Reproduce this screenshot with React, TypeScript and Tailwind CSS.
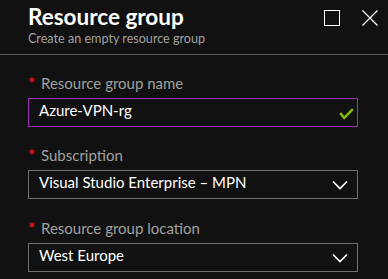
import React from 'react';

const FieldLabel: React.FC<{ text: string }> = ({ text }) => (
  <div className="flex h-[20px] text-[15px] leading-[20px] text-[#a0a0a0]">
    <span className="w-[13px] text-[17px] font-bold leading-[21px] text-[#e81123]">*</span>
    <span>{text}</span>
  </div>
);

const SelectBox: React.FC<{ value: string }> = ({ value }) => (
  <div className="flex h-[29px] w-[330px] items-start justify-between border border-[#707070] pl-[10px] pr-[9px]">
    <span className="text-[15px] leading-[23px] text-white">{value}</span>
    <svg width="16" height="10" viewBox="0 0 16 10" fill="none" className="mt-[1px] self-center">
      <path d="M1 1.5L8 8.5L15 1.5" stroke="#ffffff" strokeWidth="1.6" />
    </svg>
  </div>
);

const App: React.FC = () => {
  return (
    <div className="h-[279px] w-[388px] overflow-hidden bg-[#111111] font-['Lato','Liberation_Sans',sans-serif]">
      {/* Header */}
      <div className="flex h-[55px] justify-between border-b border-[#5a5a5a] pl-[28px] pr-[10px] pt-[3px]">
        <div>
          <div className="text-[22.5px] font-bold leading-[28px] text-white">Resource group</div>
          <div className="text-[12.6px] leading-[15px] text-[#a0a0a0]">Create an empty resource group</div>
        </div>
        <div className="flex items-start gap-[22px] pt-[7px]">
          <div className="h-[16px] w-[16px] border border-white" />
          <svg width="16" height="16" viewBox="0 0 16 16">
            <path d="M0.5 0.5L15.5 15.5M15.5 0.5L0.5 15.5" stroke="#ffffff" strokeWidth="1.2" />
          </svg>
        </div>
      </div>

      {/* Form */}
      <div className="flex flex-col pl-[28px] pt-[18px]">
        <FieldLabel text="Resource group name" />
        <div className="mt-[5px] flex h-[29px] w-[330px] items-start justify-between border border-[#9c2fb5] pl-[10px] pr-[3px]">
          <span className="text-[15px] leading-[23px] text-white">Azure-VPN-rg</span>
          <svg width="15" height="12" viewBox="0 0 15 12" fill="none" className="mt-[2px] self-center">
            <path d="M1.2 5.2L5.2 9.8L13.8 1.2" stroke="#7fba00" strokeWidth="2.6" />
          </svg>
        </div>

        <div className="mt-[18px]">
          <FieldLabel text="Subscription" />
        </div>
        <div className="mt-[5px]">
          <SelectBox value="Visual Studio Enterprise – MPN" />
        </div>

        <div className="mt-[19px]">
          <FieldLabel text="Resource group location" />
        </div>
        <div className="mt-[5px]">
          <SelectBox value="West Europe" />
        </div>
      </div>
    </div>
  );
};

export default App;
